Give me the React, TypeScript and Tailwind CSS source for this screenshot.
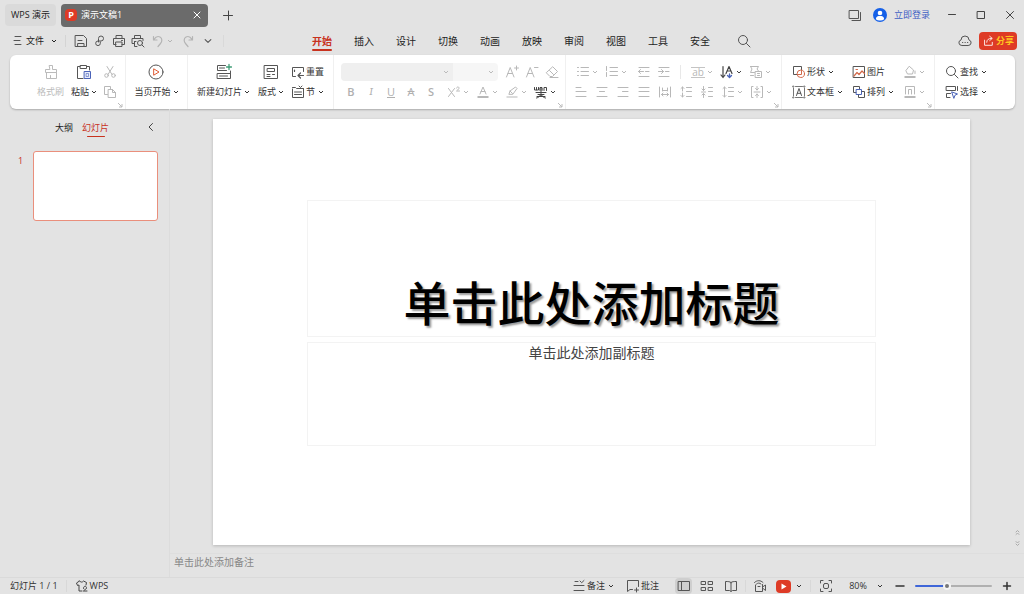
import React, { useState } from "react";
import clsx from "clsx";

const BLUE = "#4a63b8";
const ORANGE = "#d2694a";

type IconProps = {
  children: React.ReactNode;
  size?: number;
  box?: number;
  className?: string;
};

function Icon({ children, size = 14, box = 14, className }: IconProps) {
  return (
    <svg
      width={size}
      height={size}
      viewBox={`0 0 ${box} ${box}`}
      fill="none"
      stroke="currentColor"
      strokeWidth={1}
      strokeLinecap="round"
      strokeLinejoin="round"
      className={clsx("shrink-0", className)}
      aria-hidden="true"
    >
      {children}
    </svg>
  );
}

function Caret() {
  return (
    <svg width="6" height="6" viewBox="0 0 6 6" fill="none" stroke="currentColor" strokeWidth="1" className="shrink-0" aria-hidden="true">
      <path d="M1 2l2 2 2-2" />
    </svg>
  );
}

const icons = {
  menu: <path d="M4 2.500h6M3 6.500h6M4 10.500h6" />,
  save: <path d="M1.500 1.500h8l3 3v8h-11zM4 6.500h4M4 9.500h6v3H4z" />,
  link: <path d="M5.500 8V4.500a2.500 2.500 0 1 1 2.500 2.500H5a2.300 2.300 0 1 0 2.300 2.300V8" />,
  print: <path d="M4 4.500v-3h6v3M4 10.500H1.500v-6h11v6H10M4 8h6v4.500H4zM9.500 6.500h1" />,
  preview: (
    <>
      <path d="M3.500 4.500v-3h6v3M3.500 9.500H1v-5h11v2M3.500 7.500v5H6M3.500 7.500H5" />
      <circle cx="9" cy="9" r="2.500" />
      <path d="M11 11l2 2" />
    </>
  ),
  undo: <path d="M2.500 2.500v3.500H6M3 5.500c1.500-2.500 4-3.500 6-2.500 2.500 1.200 2.200 4.500.5 6.500L7 12.500" strokeWidth="1.200" />,
  redo: <path d="M11.500 2.500v3.500H8M11 5.500C9.500 3 7 2 5 3 2.500 4.200 2.800 7.500 4.500 9.500L7 12.500" strokeWidth="1.200" />,
  search: (
    <>
      <circle cx="6" cy="6" r="4.500" />
      <path d="M9.500 9.500L13 13" />
    </>
  ),
  cloud: <path d="M3.500 11.500a2.800 2.800 0 0 1-.5-5.500 4 4 0 0 1 8 0 2.800 2.800 0 0 1-.5 5.500zM4.500 8.500h.3M7 8.500h.3M9.500 8.500h.3" />,
  share: <path d="M3 6v6h9V8.500M5.500 8.500c0-3 2-4.500 5.500-4.500M9 1.500L12 4 9 6.500" />,
  windows: <path d="M1.500 2.500h9v8h-9zM12.500 4.500v8H4" />,
  cut: (
    <>
      <path d="M4 1.500l5 8M10 1.500l-5 8" />
      <circle cx="3.500" cy="10.500" r="1.800" />
      <circle cx="10.500" cy="10.500" r="1.800" />
    </>
  ),
  copy: <path d="M4.500 9.500h-3v-8h6v2.500M5.500 4.500h4l3 3v5h-7zM9.500 4.500v3h3" />,
  reset: (
    <>
      <path d="M4.500 11.500h-3v-9h11v4" />
      <path d="M3.500 5v1.500M12.500 10.500H7M9.500 8L7 10.500 9.500 13" strokeWidth="1.200" />
    </>
  ),
  section: <path d="M1.500 4v8.500h11V4M1.500 2.500h3l1 1h7M3.500 7h7M3.500 9.500h7M8 1l1.500 1.500L11 1" />,
  fontUp: <path d="M1.500 12L5.200 2.500 9 12M3 8.500h4.500M11.500 1v4M9.500 3h4" />,
  fontDown: <path d="M1.500 12L5.200 2.500 9 12M3 8.500h4.500M9.500 2.500h3.500" />,
  eraser: <path d="M8 2l4.500 4.500-5 5H5L1.500 8zM4.500 5.500l4 4M5 12.500h8" />,
  superscript: <path d="M1.500 3.500l6 8M7.500 3.500l-6 8M9.500 3c.3-1.500 2.800-1.500 2.500.3-.3 1-2.500 2.700-2.500 2.700h3" />,
  fontColor: (
    <>
      <path d="M4 9l3-7 3 7M5 6.500h4" />
      <path d="M1.500 12h11" strokeWidth="2" strokeLinecap="butt" />
    </>
  ),
  highlight: (
    <>
      <path d="M4 9L5 6l5.500-4 1.500 1.500L8 9zM5 6l2.500 2.500" />
      <path d="M1.500 12h11" strokeWidth="2" strokeLinecap="butt" opacity=".5" />
    </>
  ),
  pinyin: (
    <g strokeWidth="1">
      <path d="M.5 2.500v2.500h2V2.500M2.500 5h2V2.500M6 5.500v-3h2v3M6 4h2M10 5.500v-3h2.500v3" />
      <path d="M2 7.500h10M7 5.500v6M4 9.500h6M2.500 13c2-.5 3-1.500 4.500-3.500 1.500 2 2.500 3 4.500 3.500M3 11.500h8" />
    </g>
  ),
  bullets: <path d="M1.500 2.500h1M1.500 6.500h1M1.500 10.500h1M5 2.500h7.500M5 6.500h7.500M5 10.500h7.500" />,
  numbers: <path d="M1.500 1.500v4M1.500 7.500v4M5 2.500h7.500M5 6.500h7.500M5 10.500h7.500" />,
  outdent: <path d="M2 2.500h10M8.500 6.500h3.500M2 11.500h10M1.500 6.500h5M3.500 4.500l-2 2 2 2" />,
  indent: <path d="M2 2.500h10M8.500 6.500h3.500M2 11.500h10M1.500 6.500h5M4.500 4.500l2 2-2 2" />,
  textDown: (
    <>
      <path d="M3 1.500v10.500M1 10l2 2.500L5 10M6 8.500l3-7 3 7M7 6h4" strokeWidth="1.200" />
      <path d="M9.500 9v3M7.500 10.500l2 2 2-2" stroke={BLUE} strokeWidth="1.300" />
    </>
  ),
  convert: <path d="M1.500 1.500h8L8 4l1.500 2M1.500 1.500L3 4 1.500 7.500h4M6.500 6.500h6v6h-6zM8.500 8.500h2M8.500 10.500h2M1.500 10.500h3" />,
  alignLeft: <path d="M2 2.500h5M2 6.500h10M2 11.500h10" />,
  alignCenter: <path d="M2 2.500h10M4.500 6.500h5M2 11.500h10" />,
  alignRight: <path d="M2 2.500h10M6.500 6.500h5.500M2 11.500h10" />,
  alignJustify: <path d="M2 2.500h10M2 6.500h10M2 11.500h10" />,
  columns: <path d="M1.500 2v10M12.500 2v10M4.500 3v3M9.500 3v3M4.500 5.500h5M3.500 9.500h7M5 8L3.500 9.500 5 11M9 8l1.500 1.500L9 11" />,
  lineIn: <path d="M3.500 2v4M2 3.500L3.500 2 5 3.500M3.500 8v4M2 10.500L3.500 12 5 10.500M7.500 2.500h5M7.500 6.500h5M7.500 11.500h5" />,
  lineOut: <path d="M3.500 1.500v4M2 4l1.500 1.500L5 4M3.500 8.500v4M2 10l1.500-1.500L5 10M1.500 7h4M8.500 2.500h4M8.500 6.500h4M8.500 11.500h4" />,
  spacing: <path d="M3.500 2v10M2 3.500L3.500 2 5 3.500M2 10.500L3.500 12 5 10.500M7.500 2.500h5M7.500 6.500h5M7.500 11.500h5" />,
  vertical: <path d="M3 1.500H1.500v11H3M11 1.500h1.500v11H11M4 7h6M7 1.500v3.500M5.500 3.500L7 5l1.500-1.500M7 12.500V9M5.500 10.500L7 9l1.500 1.500" />,
  shapes: (
    <>
      <path d="M5 9.500H1.500v-8h8V5" />
      <circle cx="8.800" cy="8.800" r="3.700" stroke={ORANGE} />
      <path d="M5.500 9.500h4V5.500" stroke={ORANGE} />
    </>
  ),
  textBox: (
    <>
      <path d="M3.500 1.500h7M3.500 12.500h7M1.500 3v8M12.500 3v8" stroke="#777" />
      <path d="M1 1h1v1H1zM12 1h1v1h-1zM1 12h1v1H1zM12 12h1v1h-1z" strokeWidth=".6" />
      <path d="M4.500 10.500L7 3.500l2.500 7M5.300 8.300h3.400" />
    </>
  ),
  picture: (
    <>
      <path d="M1.500 1.500h11v11h-11z" />
      <path d="M2 11l3-3.500 2 2L10 6l2.500 2.500M4 4.500h1.500" stroke={ORANGE} strokeWidth="1.200" />
    </>
  ),
  arrange: (
    <>
      <path d="M4 7.500H1.500v-6h6V4" />
      <path d="M4.500 4.500h5v5h-5z" stroke={BLUE} />
      <path d="M10 6.500h2.500v6h-6V10" />
    </>
  ),
  fill: (
    <>
      <path d="M6.500 1.500l4 3.500-1 4h-5l-1.500-3zM12 6v2.500" />
      <path d="M1.500 12h11" strokeWidth="2" strokeLinecap="butt" />
    </>
  ),
  outline: (
    <>
      <path d="M2.500 9V1.500h9V9M5.500 9V4.500h3V9" />
      <path d="M1.500 12h11" strokeWidth="2" strokeLinecap="butt" />
    </>
  ),
  select: (
    <>
      <path d="M1.500 1.500h9v4h-9zM12.500 1.500v4M5 12.500H1.500v-4h4" />
      <path d="M7 7l5.500 2-2.500 1.200-1 2.800z" stroke={BLUE} />
    </>
  ),
  shirt: <path d="M4.500 2L1.500 4l1 2.500L4 6v6h3M4.500 2c1 1.500 3 1.500 4 0l3 1.500-.5 2.500M8.500 9.500c-.5-3 3.500-3 3 0l-1.500 1-1.500 1.500M9 12h3" />,
  notes: <path d="M3 2.500h3M2 6.500h10M2 11.500h10M8 2l1.700 1.700L12 1.500" />,
  comment: <path d="M6.500 10.500H4l-2.500 2v-11h11v6M10.500 9v4M8.500 11h4" />,
  normalView: <path d="M1.500 2.500h11v9h-11zM4.500 2.500v9" />,
  sorter: <path d="M1.500 2.500h4v3h-4zM8.500 2.500h4v3h-4zM1.500 8.500h4v3h-4zM8.500 8.500h4v3h-4z" />,
  book: <path d="M7 3.500v8.500M7 3.500C6 2.500 4 2.500 1.500 2.500v9h4L7 12.500l1.500-1h4v-9C10 2.500 8 2.500 7 3.500z" />,
  record: <path d="M2.500 6v6.500h7v-7M9.500 9l3 2.500V6l-3 2M1.500 3.500C4 1 7.500 1 10 3.500M3.500 5c1.500-1.300 3-1.300 4.500 0M5 7.500h2" />,
  fit: (
    <>
      <path d="M1.500 4V1.500H4M10 1.500h2.500V4M12.500 10v2.500H10M4 12.500H1.500V10" />
      <rect x="4.500" y="4.500" width="5" height="5" rx="1.500" />
    </>
  ),
};

type IconName = keyof typeof icons;

function ToolButton({
  icon,
  label,
  disabled,
  caret,
  className = "w-5",
}: {
  icon: IconName;
  label: string;
  disabled?: boolean;
  caret?: boolean;
  className?: string;
}) {
  return (
    <button
      type="button"
      aria-label={label}
      disabled={disabled}
      className={clsx(
        "flex h-5 items-center gap-0.5",
        caret ? "w-[29px]" : clsx("justify-center", className),
        disabled ? "text-[#b8b8b8]" : "text-[#444]"
      )}
    >
      <Icon>{icons[icon]}</Icon>
      {caret && <Caret />}
    </button>
  );
}

function LabelButton({ icon, label, caret }: { icon: IconName; label: string; caret?: boolean }) {
  return (
    <button type="button" className="flex h-5 items-center gap-px whitespace-nowrap">
      <Icon className="text-[#555]">{icons[icon]}</Icon>
      <span>{label}</span>
      {caret && <span className="ml-0.5 flex"><Caret /></span>}
    </button>
  );
}

function BigButton({
  label,
  caret,
  disabled,
  children,
}: {
  label: string;
  caret?: boolean;
  disabled?: boolean;
  children: React.ReactNode;
}) {
  return (
    <button type="button" disabled={disabled} className={clsx("flex flex-col items-center", disabled && "text-[#bbb]")}>
      <span className={clsx("flex h-5 items-center", !disabled && "text-[#555]")}>
        <Icon size={18} box={18}>{children}</Icon>
      </span>
      <span className="flex h-5 items-center gap-0.5 whitespace-nowrap">
        {label}
        {caret && <Caret />}
      </span>
    </button>
  );
}

function FormatLetter({ label, children, className }: { label: string; children: string; className?: string }) {
  return (
    <button type="button" disabled aria-label={label} className={clsx("h-5 w-5 text-[11px] text-[#b0b0b0]", className)}>
      {children}
    </button>
  );
}

function Group({ children, className, corner }: { children: React.ReactNode; className?: string; corner?: boolean }) {
  return (
    <div className={clsx("relative flex h-full shrink-0 items-start border-r border-[#f0f0f0] pt-[7px] last:border-r-0", className)}>
      {children}
      {corner && (
        <svg width="6" height="6" viewBox="0 0 6 6" fill="none" stroke="#bbb" className="absolute right-0.5 bottom-px" aria-hidden="true">
          <path d="M1 1l4 4M5 2v3H2" />
        </svg>
      )}
    </div>
  );
}

function FontSelect({ label, className }: { label: string; className?: string }) {
  return (
    <span className={clsx("relative flex h-[18px] items-center", className)}>
      <select aria-label={label} disabled className="h-full w-full appearance-none">
        <option value=""></option>
      </select>
      <span className="pointer-events-none absolute right-1 text-[#bbb]">
        <Caret />
      </span>
    </span>
  );
}

function TitleBar() {
  return (
    <header className="flex h-[30px] items-center pl-[5px]">
      <button type="button" className="h-[22px] rounded bg-[#dadada] px-1.5 text-[#222]">WPS 演示</button>
      <div className="ml-[5px] flex h-[23px] w-[147px] items-center rounded bg-[#6b6b6b] pr-1 pl-1 text-white">
        <span className="grid h-3 w-3 place-items-center rounded-sm bg-[#de3b26] text-[9px] leading-3 font-bold">P</span>
        <span className="ml-1">演示文稿1</span>
        <button type="button" aria-label="关闭标签" className="ml-auto">
          <Icon><path d="M4 4l6 6M10 4l-6 6" /></Icon>
        </button>
      </div>
      <button type="button" aria-label="新建" className="ml-3 text-[#444]">
        <Icon size={16} box={16}><path d="M3.500 8.500h9M8.500 4v9" strokeWidth="1" /></Icon>
      </button>
      <div className="ml-auto flex items-center pr-[7px]">
        <button type="button" aria-label="窗口"><Icon className="text-[#555]">{icons.windows}</Icon></button>
        <button type="button" className="ml-[11px] flex items-center gap-[7px] text-[#3f60c4]">
          <svg width="14" height="14" viewBox="0 0 14 14" aria-hidden="true">
            <circle cx="7" cy="7" r="7" fill="#1560e8" />
            <circle cx="7" cy="5" r="2.300" fill="#fff" />
            <path d="M2.800 11.200C3 8.500 5 8 7 8s4 .5 4.200 3.200A6 6 0 0 1 7 12.500a6 6 0 0 1-4.200-1.300z" fill="#fff" />
          </svg>
          立即登录
        </button>
        <div className="ml-[15px] flex gap-[15px] text-[#444]">
          <button type="button" aria-label="最小化"><Icon><path d="M3.500 6.500h7" /></Icon></button>
          <button type="button" aria-label="最大化"><Icon><path d="M3.500 3.500h7v7h-7z" /></Icon></button>
          <button type="button" aria-label="关闭"><Icon><path d="M3.500 3.500l7 7M10.500 3.500l-7 7" /></Icon></button>
        </div>
      </div>
    </header>
  );
}

const TABS = ["开始", "插入", "设计", "切换", "动画", "放映", "审阅", "视图", "工具", "安全"];

function MenuBar() {
  const [active, setActive] = useState("开始");
  return (
    <nav className="flex h-[25px] items-start">
      <div className="flex h-[22px] w-[301px] shrink-0 items-center pl-[11px] text-[#555]">
        <button type="button" className="flex items-center gap-px text-[#222]">
          <Icon className="text-[#555]">{icons.menu}</Icon>
          文件
          <span className="ml-1.5 flex"><Caret /></span>
        </button>
        <span className="mx-2 h-3 w-px bg-[#d4d4d4]" />
        <div className="flex items-center gap-[5px]">
          <button type="button" aria-label="保存"><Icon>{icons.save}</Icon></button>
          <button type="button" aria-label="输出"><Icon>{icons.link}</Icon></button>
          <button type="button" aria-label="打印"><Icon>{icons.print}</Icon></button>
          <button type="button" aria-label="打印预览"><Icon>{icons.preview}</Icon></button>
        </div>
        <button type="button" aria-label="撤销" disabled className="ml-1.5 flex items-center gap-0.5 text-[#b4b4b4]">
          <Icon>{icons.undo}</Icon>
          <Caret />
        </button>
        <button type="button" aria-label="恢复" disabled className="ml-2 text-[#b4b4b4]"><Icon>{icons.redo}</Icon></button>
        <button type="button" aria-label="更多" className="ml-2"><Icon size={10}><path d="M3 5l4 4 4-4" strokeWidth="1.500" /></Icon></button>
        <span className="ml-2.5 h-3 w-px bg-[#d9d9d9]" />
      </div>
      <div role="tablist" className="flex">
        {TABS.map((tab) => (
          <button
            key={tab}
            type="button"
            role="tab"
            aria-selected={tab === active}
            onClick={() => setActive(tab)}
            className={clsx("flex w-[42px] flex-col items-center text-[10px]", tab === active ? "font-bold text-[#c8321e]" : "text-[#222]")}
          >
            <span className="h-[19px] leading-[22px]">{tab}</span>
            {tab === active && <span className="h-0.5 w-5 rounded bg-[#c8321e]" />}
          </button>
        ))}
      </div>
      <button type="button" aria-label="搜索" className="ml-4 flex h-[22px] items-center text-[#555]">
        <Icon>{icons.search}</Icon>
      </button>
      <div className="ml-auto flex h-[22px] items-center gap-[7px] pr-[7px]">
        <button type="button" aria-label="云服务" className="text-[#555]"><Icon>{icons.cloud}</Icon></button>
        <button type="button" className="flex h-[18px] items-center gap-0.5 rounded-sm bg-[#de3b26] px-[3px] font-bold text-[#ffc61f]">
          <Icon size={12} className="text-white">{icons.share}</Icon>
          分享
        </button>
      </div>
    </nav>
  );
}

function Ribbon() {
  return (
    <section className="mr-[9px] ml-2.5 flex h-[54px] overflow-hidden rounded-md bg-white text-[#333] shadow-[0_1px_2px_rgba(0,0,0,0.25)]">
      <Group className="w-[116px] pl-[27px]" corner>
        <BigButton label="格式刷" disabled>
          <path d="M7.500 2.500h3v4h4v3h-11v-3h4zM4.500 9.500v6h10v-6M8.500 15.500v-3" />
        </BigButton>
        <div className="ml-[7px]">
          <BigButton label="粘贴" caret>
            <path d="M5 3.500H2.500v12H8M12 3.500h2.500V7M5.500 2.500h6v3h-6z" />
            <path d="M9.500 8.500h6v7h-6z" stroke={BLUE} fill="#e6ebfa" />
            <path d="M11.500 10.500h2v3h-2z" stroke={BLUE} strokeWidth=".6" />
          </BigButton>
        </div>
        <div className="ml-[3px]">
          <ToolButton icon="cut" label="剪切" disabled />
          <ToolButton icon="copy" label="复制" disabled />
        </div>
      </Group>
      <Group className="w-[62px] justify-center">
        <BigButton label="当页开始" caret>
          <circle cx="9" cy="9" r="7" />
          <path d="M7 6l5 3-5 3z" stroke="#df5b33" />
        </BigButton>
      </Group>
      <Group className="w-[146px] gap-2 pl-[9px]">
        <BigButton label="新建幻灯片" caret>
          <path d="M10.500 2.500h-8v5h9M2.500 10.500h13v5h-13zM15.500 8v2.500M4.500 5h5M4.500 13h8" />
          <path d="M14 1.500v5M11.500 4h5" stroke="#3f9d77" strokeWidth="1.300" />
        </BigButton>
        <BigButton label="版式" caret>
          <path d="M2.500 2.500h13v13h-13zM5.500 5.500h7v3h-7zM5 11.500h3M10.500 11.500h2M5 13.500h3" />
        </BigButton>
        <div className="-ml-px">
          <LabelButton icon="reset" label="重置" />
          <LabelButton icon="section" label="节" caret />
        </div>
      </Group>
      <Group className="w-[232px] flex-col pl-[7px]" corner>
        <div className="flex h-5 items-center">
          <FontSelect label="字体" className="w-[112px] rounded-l-sm bg-[#efefef]" />
          <FontSelect label="字号" className="mr-1 w-[45px] rounded-r-sm bg-[#f6f6f6]" />
          <ToolButton icon="fontUp" label="增大字号" disabled />
          <ToolButton icon="fontDown" label="减小字号" disabled />
          <ToolButton icon="eraser" label="清除格式" disabled />
        </div>
        <div className="flex h-5 items-center">
          <FormatLetter label="加粗" className="font-semibold">B</FormatLetter>
          <FormatLetter label="倾斜" className="font-serif italic">I</FormatLetter>
          <FormatLetter label="下划线" className="underline">U</FormatLetter>
          <FormatLetter label="删除线" className="line-through">A</FormatLetter>
          <FormatLetter label="阴影" className="font-semibold">S</FormatLetter>
          <div className="ml-1.5 flex">
            <ToolButton icon="superscript" label="上标" disabled caret />
            <ToolButton icon="fontColor" label="字体颜色" disabled caret />
            <ToolButton icon="highlight" label="突出显示" disabled caret />
            <ToolButton icon="pinyin" label="拼音指南" caret />
          </div>
        </div>
      </Group>
      <Group className="w-[216px] flex-col" corner>
        <div className="flex h-5 items-center pl-2.5">
          <ToolButton icon="bullets" label="项目符号" disabled caret />
          <ToolButton icon="numbers" label="编号" disabled caret />
          <ToolButton icon="outdent" label="减少缩进" disabled />
          <ToolButton icon="indent" label="增加缩进" disabled />
          <span className="mr-2.5 ml-1.5 h-3.5 w-px bg-[#e8e8e8]" />
          <button type="button" aria-label="文字效果" disabled className="flex h-5 w-[29px] items-center gap-0.5 text-[#b8b8b8]">
            <span className="w-3.5 border-y border-[#c4c4c4] text-center text-[10px] leading-[9px]">ab</span>
            <Caret />
          </button>
          <ToolButton icon="textDown" label="文字方向" caret />
          <ToolButton icon="convert" label="转换图形" disabled caret />
        </div>
        <div className="flex h-5 items-center pl-1">
          <ToolButton icon="alignLeft" label="左对齐" disabled className="w-[21px]" />
          <ToolButton icon="alignCenter" label="居中" disabled className="w-[21px]" />
          <ToolButton icon="alignRight" label="右对齐" disabled className="w-[21px]" />
          <ToolButton icon="alignJustify" label="两端对齐" disabled className="w-[21px]" />
          <ToolButton icon="columns" label="分散对齐" disabled className="w-[21px]" />
          <ToolButton icon="lineIn" label="增大段距" disabled className="w-[21px]" />
          <ToolButton icon="lineOut" label="减小段距" disabled className="w-[21px]" />
          <div className="ml-1 flex">
            <ToolButton icon="spacing" label="行距" disabled caret />
            <ToolButton icon="vertical" label="垂直对齐" disabled caret />
          </div>
        </div>
      </Group>
      <Group className="w-[153px] pl-2.5" corner>
        <div className="w-[60px]">
          <LabelButton icon="shapes" label="形状" caret />
          <LabelButton icon="textBox" label="文本框" caret />
        </div>
        <div className="w-[51px]">
          <LabelButton icon="picture" label="图片" />
          <LabelButton icon="arrange" label="排列" caret />
        </div>
        <div>
          <ToolButton icon="fill" label="填充" disabled caret />
          <ToolButton icon="outline" label="轮廓" disabled caret />
        </div>
      </Group>
      <Group className="pl-2.5">
        <div>
          <LabelButton icon="search" label="查找" caret />
          <LabelButton icon="select" label="选择" caret />
        </div>
      </Group>
    </section>
  );
}

function SlidePanel() {
  return (
    <aside className="w-[170px] shrink-0 border-r border-[#dcdcdc]">
      <div className="flex items-start gap-[9px] pt-[11px] pl-[55px]">
        <button type="button" className="leading-4 text-[#222]">大纲</button>
        <button type="button" className="flex flex-col items-center text-[#c8321e]">
          <span className="leading-4">幻灯片</span>
          <span className="h-px w-[18px] rounded bg-[#c8321e]" />
        </button>
        <button type="button" aria-label="收起" className="mr-[11px] ml-auto text-[#444]">
          <Icon><path d="M8.500 3.500L5 7l3.500 3.500" /></Icon>
        </button>
      </div>
      <ol className="mt-3.5">
        <li className="flex gap-[9px] pl-[18px]">
          <span className="w-1.5 pt-0.5 text-[9px] leading-4 text-[#c8321e]">1</span>
          <button type="button" aria-label="幻灯片 1" className="aspect-[16/9] w-[125px] rounded-[3px] border border-[#ea8f7c] bg-white" />
        </li>
      </ol>
    </aside>
  );
}

function Editor() {
  return (
    <div className="flex min-w-0 flex-1 flex-col">
      <div className="relative flex-1 pt-2.5 pr-[54px] pb-2 pl-[43px]">
        <article className="aspect-[16/9] w-full bg-white px-[94px] pt-[81px] text-center shadow-[0_1px_3px_rgba(0,0,0,0.2)]">
          <div className="flex h-[137px] items-end justify-center border border-[#f3f3f3]">
            <h1 className="text-[47px] leading-[66px] font-medium whitespace-nowrap text-black [text-shadow:2px_2px_2px_rgba(0,0,0,0.4)]">单击此处添加标题</h1>
          </div>
          <div className="mt-[5px] h-[104px] border border-[#f3f3f3]">
            <p className="text-[14px] leading-5 text-[#444]">单击此处添加副标题</p>
          </div>
        </article>
        <div className="absolute right-[3px] bottom-1.5 flex flex-col gap-1 text-[#aaa]">
          <Icon size={7}><path d="M4 6l3-3 3 3M4 11l3-3 3 3" strokeWidth="2" /></Icon>
          <Icon size={7}><path d="M4 3l3 3 3-3M4 8l3 3 3-3" strokeWidth="2" /></Icon>
        </div>
      </div>
      <input
        aria-label="备注"
        placeholder="单击此处添加备注"
        className="h-6 w-full border-t border-[#dedede] pb-1.5 pl-1 text-[10px] outline-none placeholder:text-[#888]"
      />
    </div>
  );
}

function Divider() {
  return <span className="h-3 w-px bg-[#d8d8d8]" />;
}

function StatusBar() {
  const [zoom, setZoom] = useState(80);
  const fill = zoom / 2;
  return (
    <footer className="flex h-[18px] items-center border-t border-[#dadada] px-2.5 text-[#333]">
      <span>幻灯片 1 / 1</span>
      <span className="mx-2 flex"><Divider /></span>
      <button type="button" className="flex items-center gap-px"><Icon className="text-[#444]">{icons.shirt}</Icon>WPS</button>
      <div className="ml-auto flex items-center">
        <button type="button" className="flex items-center gap-px">
          <Icon className="text-[#555]">{icons.notes}</Icon>
          备注
          <span className="ml-0.5 flex"><Caret /></span>
        </button>
        <button type="button" className="ml-3 flex items-center gap-px"><Icon className="text-[#555]">{icons.comment}</Icon>批注</button>
        <button type="button" aria-label="普通视图" className="ml-4 grid h-4 w-[17px] place-items-center rounded-sm bg-[#cfcfcf] text-[#555]"><Icon>{icons.normalView}</Icon></button>
        <button type="button" aria-label="浏览视图" className="ml-2 text-[#555]"><Icon>{icons.sorter}</Icon></button>
        <button type="button" aria-label="阅读视图" className="ml-2.5 text-[#555]"><Icon>{icons.book}</Icon></button>
        <span className="mx-[7px] flex"><Divider /></span>
        <button type="button" aria-label="录制" className="text-[#555]"><Icon>{icons.record}</Icon></button>
        <button type="button" aria-label="放映" className="mr-[5px] ml-[9px] grid h-[13px] w-[15px] place-items-center rounded-sm bg-[#de3b26]">
          <svg width="7" height="7" viewBox="0 0 7 7" fill="#fff" aria-hidden="true"><path d="M1.500.5l5 3-5 3z" /></svg>
        </button>
        <Caret />
        <span className="mx-2 flex"><Divider /></span>
        <button type="button" aria-label="最佳显示比例" className="text-[#555]"><Icon>{icons.fit}</Icon></button>
        <button type="button" className="ml-3.5 flex items-center gap-2">
          <span className="w-[22px]">{zoom}%</span>
          <Caret />
        </button>
        <button type="button" aria-label="缩小" className="ml-2.5" onClick={() => setZoom((z) => Math.max(0, z - 10))}>
          <Icon><path d="M3 7h8" strokeWidth="1.500" /></Icon>
        </button>
        <input
          type="range"
          aria-label="显示比例"
          min={0}
          max={200}
          value={zoom}
          onChange={(e) => setZoom(Number(e.target.value))}
          className="mx-2 h-0.5 w-[77px] appearance-none rounded [&::-webkit-slider-thumb]:h-2 [&::-webkit-slider-thumb]:w-2 [&::-webkit-slider-thumb]:appearance-none [&::-webkit-slider-thumb]:rounded-full [&::-webkit-slider-thumb]:border-2 [&::-webkit-slider-thumb]:border-[#f4f4f4] [&::-webkit-slider-thumb]:bg-[#777]"
          style={{ background: `linear-gradient(to right, #3f66d8 ${fill}%, #b0b0b0 ${fill}%)` }}
        />
        <button type="button" aria-label="放大" onClick={() => setZoom((z) => Math.min(200, z + 10))}>
          <Icon><path d="M3.500 7h7M7 3.500v7" strokeWidth="1.500" /></Icon>
        </button>
      </div>
    </footer>
  );
}

export default function App() {
  return (
    <div className="flex min-h-screen flex-col bg-[#e3e3e3] font-['Open_Sans','Noto_Sans_CJK_SC',sans-serif] text-[9px] leading-[14px] text-[#333]">
      <TitleBar />
      <MenuBar />
      <Ribbon />
      <main className="flex flex-1">
        <SlidePanel />
        <Editor />
      </main>
      <StatusBar />
    </div>
  );
}
